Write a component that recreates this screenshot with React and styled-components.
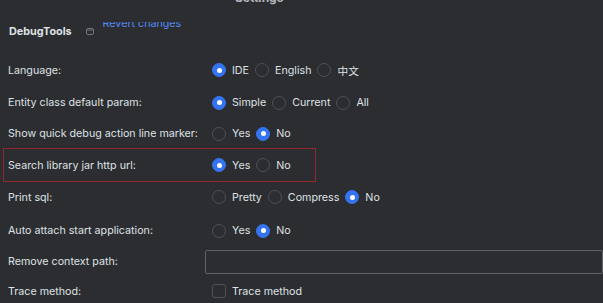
import React, { useState } from "react";
import styled, { createGlobalStyle } from "styled-components";

const GlobalStyle = createGlobalStyle`
  body {
    margin: 0;
    background: #2b2d30;
    font-family: Inter, "Noto Sans CJK SC", sans-serif;
    color: #dfe1e5;
    overflow: hidden;
  }
`;

const Page = styled.div`
  display: flex;
  flex-direction: column;
  width: 603px;
  height: 303px;
  overflow: hidden;

  & > * {
    flex: none;
  }
`;

const TitleBar = styled.div`
  display: flex;
  align-items: flex-end;
  height: 6px;
  padding-left: 235px;
  overflow: hidden;
`;

const Title = styled.span`
  font-size: 12px;
  font-weight: 700;
  line-height: 13px;
  color: #b4b8bf;
  margin-bottom: 2px;
`;

const Header = styled.div`
  display: flex;
  align-items: center;
  height: 45px;
  padding: 3px 0 0 9px;
`;

const Heading = styled.span`
  font-size: 10.8px;
  font-weight: 700;
  color: #dfe1e5;
`;

const HeaderIcon = styled.svg`
  margin-left: 14px;
  flex: none;
`;

const RevertClip = styled.div`
  display: flex;
  align-items: flex-end;
  align-self: flex-start;
  height: 8px;
  margin: 13px 0 0 9px;
  overflow: hidden;
`;

const RevertLink = styled.a`
  font-size: 10.7px;
  line-height: 13px;
  color: #548af7;
  cursor: pointer;
`;

const Row = styled.div`
  display: grid;
  grid-template-columns: 197px 1fr;
  align-items: center;
  height: ${(p) => p.$h}px;
  padding-left: ${(p) => (p.$inset ? 4 : 8)}px;
  box-sizing: border-box;
`;

const Highlight = styled.div`
  width: 313px;
  margin-left: 3px;
  border: 1px solid #93272e;
  box-sizing: border-box;
`;

const Label = styled.span`
  font-size: 10.7px;
  color: #dfe1e5;
  white-space: nowrap;
`;

const Group = styled.div`
  display: flex;
  align-items: center;
  gap: 6px;
  padding-left: 7px;
`;

const Option = styled.label`
  display: flex;
  align-items: center;
  gap: 6px;
  font-size: 10.7px;
  color: #dfe1e5;
  cursor: pointer;
  white-space: nowrap;
`;

const RadioDot = styled.span`
  width: 14px;
  height: 14px;
  border-radius: 50%;
  box-sizing: border-box;
  display: flex;
  align-items: center;
  justify-content: center;
  flex: none;
  background: ${(p) => (p.$on ? "#3574f0" : "#2b2d30")};
  border: 1px solid ${(p) => (p.$on ? "#3574f0" : "#4e5157")};

  &::after {
    content: "";
    width: 5px;
    height: 5px;
    border-radius: 50%;
    background: #fff;
    display: ${(p) => (p.$on ? "block" : "none")};
  }
`;

const TextField = styled.input`
  width: 398px;
  height: 24px;
  box-sizing: border-box;
  border: 1px solid #5e6166;
  border-radius: 2px;
  background: #2b2d30;
  color: #dfe1e5;
  outline: none;
  margin: 0;
`;

const Check = styled.span`
  width: 14px;
  height: 14px;
  box-sizing: border-box;
  border: 1px solid #4e5157;
  border-radius: 3px;
  flex: none;
`;

const RadioGroup = ({ options, value, onChange }) => (
  <Group>
    {options.map((o) => (
      <Option key={o} onClick={() => onChange(o)}>
        <RadioDot $on={value === o} />
        {o}
      </Option>
    ))}
  </Group>
);

const App = () => {
  const [form, setForm] = useState({
    language: "IDE",
    entity: "Simple",
    marker: "No",
    search: "Yes",
    sql: "No",
    attach: "No",
    path: "",
  });

  const set = (name) => (value) => setForm({ ...form, [name]: value });

  return (
    <>
      <GlobalStyle />
      <Page>
        <TitleBar>
          <Title>Settings</Title>
        </TitleBar>
        <Header>
          <Heading>DebugTools</Heading>
          <HeaderIcon width="8" height="7" viewBox="0 0 8 7">
            <rect x="0.5" y="0.5" width="7" height="6" rx="1.5" fill="none" stroke="#6f737a" />
            <line x1="1" y1="2" x2="7" y2="2" stroke="#6f737a" />
          </HeaderIcon>
          <RevertClip>
            <RevertLink>Revert changes</RevertLink>
          </RevertClip>
        </Header>

        <Row $h={32}>
          <Label>Language:</Label>
          <RadioGroup options={["IDE", "English", "中文"]} value={form.language} onChange={set("language")} />
        </Row>
        <Row $h={33}>
          <Label>Entity class default param:</Label>
          <RadioGroup options={["Simple", "Current", "All"]} value={form.entity} onChange={set("entity")} />
        </Row>
        <Row $h={29}>
          <Label>Show quick debug action line marker:</Label>
          <RadioGroup options={["Yes", "No"]} value={form.marker} onChange={set("marker")} />
        </Row>
        <Highlight>
          <Row $h={32} $inset>
            <Label>Search library jar http url:</Label>
            <RadioGroup options={["Yes", "No"]} value={form.search} onChange={set("search")} />
          </Row>
        </Highlight>
        <Row $h={30}>
          <Label>Print sql:</Label>
          <RadioGroup options={["Pretty", "Compress", "No"]} value={form.sql} onChange={set("sql")} />
        </Row>
        <Row $h={37}>
          <Label>Auto attach start application:</Label>
          <RadioGroup options={["Yes", "No"]} value={form.attach} onChange={set("attach")} />
        </Row>
        <Row $h={25}>
          <Label>Remove context path:</Label>
          <TextField value={form.path} onChange={(e) => set("path")(e.target.value)} />
        </Row>
        <Row $h={34}>
          <Label>Trace method:</Label>
          <Group>
            <Option>
              <Check />
              Trace method
            </Option>
          </Group>
        </Row>
      </Page>
    </>
  );
};

export default App;
